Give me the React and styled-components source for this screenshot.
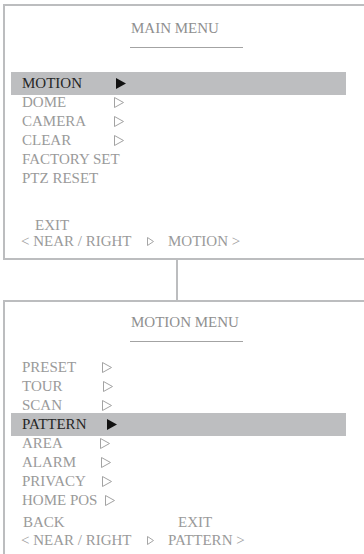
import React from "react";
import styled, { createGlobalStyle } from "styled-components";

const GlobalStyle = createGlobalStyle`
  html, body {
    margin: 0;
    padding: 0;
    background: #ffffff;
    overflow: hidden;
  }
  body {
    font-family: "Liberation Serif", "Times New Roman", serif;
  }
`;

const BORDER = "#bcbdbf";

const Page = styled.div`
  display: flex;
  flex-direction: column;
  padding: 4px 0 0 3px;
  width: 361px;
  height: 550px;
`;

const MenuBox = styled.section`
  display: flex;
  flex-direction: column;
  border: 2px solid ${BORDER};
  border-right: none;
  ${(p) => (p.$open ? "border-bottom: none; flex: 1;" : "padding-bottom: 9px;")}
`;

const Connector = styled.div`
  width: 2px;
  height: 40px;
  margin-left: 173px;
  background: ${BORDER};
`;

const Title = styled.div`
  margin: ${(p) => p.$top}px 0 0 125px;
  width: 112px;
  padding: 0 0 9px 1px;
  border-bottom: 1.5px solid #a3a3a3;
  font-size: 15px;
  line-height: 19px;
  color: #8f8f8f;
  white-space: nowrap;
`;

const List = styled.div`
  display: flex;
  flex-direction: column;
  margin: ${(p) => p.$top}px 0 0 6px;
  width: 335px;
`;

const Row = styled.div`
  display: grid;
  grid-template-columns: ${(p) => p.$col}px auto;
  align-items: center;
  padding-left: 11px;
  font-size: 15px;
  line-height: 19px;
  height: 19px;
  white-space: nowrap;
  color: ${(p) => (p.$active ? "#262626" : "#9a9a9a")};
  ${(p) =>
    p.$active &&
    `
    background: #bdbec0;
    padding-top: 2px;
    padding-bottom: 2px;
    margin: -2px 0;
  `}
`;

const Arrow = styled.svg`
  display: block;
  width: ${(p) => (p.$small ? 7 : 10)}px;
  height: ${(p) => (p.$small ? 9 : 11)}px;
  overflow: visible;
`;

const Triangle = ({ filled, small }) =>
  small ? (
    <Arrow $small viewBox="0 0 7 9">
      <polygon points="0.5,0.5 6.5,4.5 0.5,8.5" fill="none" stroke="#a6a6a6" strokeWidth="1" />
    </Arrow>
  ) : filled ? (
    <Arrow viewBox="0 0 10 11">
      <polygon points="0,0 10,5.5 0,11" fill="#111111" />
    </Arrow>
  ) : (
    <Arrow viewBox="0 0 10 11">
      <polygon points="0.5,0.5 9.5,5.5 0.5,10.5" fill="none" stroke="#a3a3a3" strokeWidth="1" />
    </Arrow>
  );

const Footer = styled.div`
  display: grid;
  grid-template-columns: 126px 21px auto;
  row-gap: ${(p) => p.$gap}px;
  margin: ${(p) => p.$top}px 0 0 16px;
  font-size: 15px;
  line-height: 16px;
  color: #9a9a9a;
  white-space: nowrap;
`;

const Cell = styled.div`
  padding-left: ${(p) => p.$indent || 0}px;
  display: flex;
  align-items: center;
`;

const mainItems = [
  { label: "MOTION", arrow: "filled", x: 116, active: true },
  { label: "DOME", arrow: "hollow", x: 114 },
  { label: "CAMERA", arrow: "hollow", x: 114 },
  { label: "CLEAR", arrow: "hollow", x: 114 },
  { label: "FACTORY SET" },
  { label: "PTZ RESET" },
];

const motionItems = [
  { label: "PRESET", arrow: "hollow", x: 102 },
  { label: "TOUR", arrow: "hollow", x: 103 },
  { label: "SCAN", arrow: "hollow", x: 102 },
  { label: "PATTERN", arrow: "filled", x: 107, active: true },
  { label: "AREA", arrow: "hollow", x: 100 },
  { label: "ALARM", arrow: "hollow", x: 101 },
  { label: "PRIVACY", arrow: "hollow", x: 102 },
  { label: "HOME POS", arrow: "hollow", x: 105 },
];

const MenuList = ({ items, top }) => (
  <List $top={top}>
    {items.map((it) => (
      <Row key={it.label} $active={it.active} $col={it.x ? it.x - 22 : 200}>
        <span>{it.label}</span>
        {it.arrow ? <Triangle filled={it.arrow === "filled"} /> : <span />}
      </Row>
    ))}
  </List>
);

export default function App() {
  return (
    <>
      <GlobalStyle />
      <Page>
        <MenuBox>
          <Title $top={13}>MAIN MENU</Title>
          <MenuList items={mainItems} top={26} />
          <Footer $top={29} $gap={0}>
            <Cell $indent={14}>EXIT</Cell>
            <Cell />
            <Cell />
            <Cell>&lt; NEAR / RIGHT</Cell>
            <Cell>
              <Triangle small />
            </Cell>
            <Cell>MOTION &gt;</Cell>
          </Footer>
        </MenuBox>
        <Connector />
        <MenuBox $open>
          <Title $top={11}>MOTION MENU</Title>
          <MenuList items={motionItems} top={16} />
          <Footer $top={4} $gap={2}>
            <Cell $indent={2}>BACK</Cell>
            <Cell />
            <Cell $indent={10}>EXIT</Cell>
            <Cell>&lt; NEAR / RIGHT</Cell>
            <Cell>
              <Triangle small />
            </Cell>
            <Cell>PATTERN &gt;</Cell>
          </Footer>
        </MenuBox>
      </Page>
    </>
  );
}
